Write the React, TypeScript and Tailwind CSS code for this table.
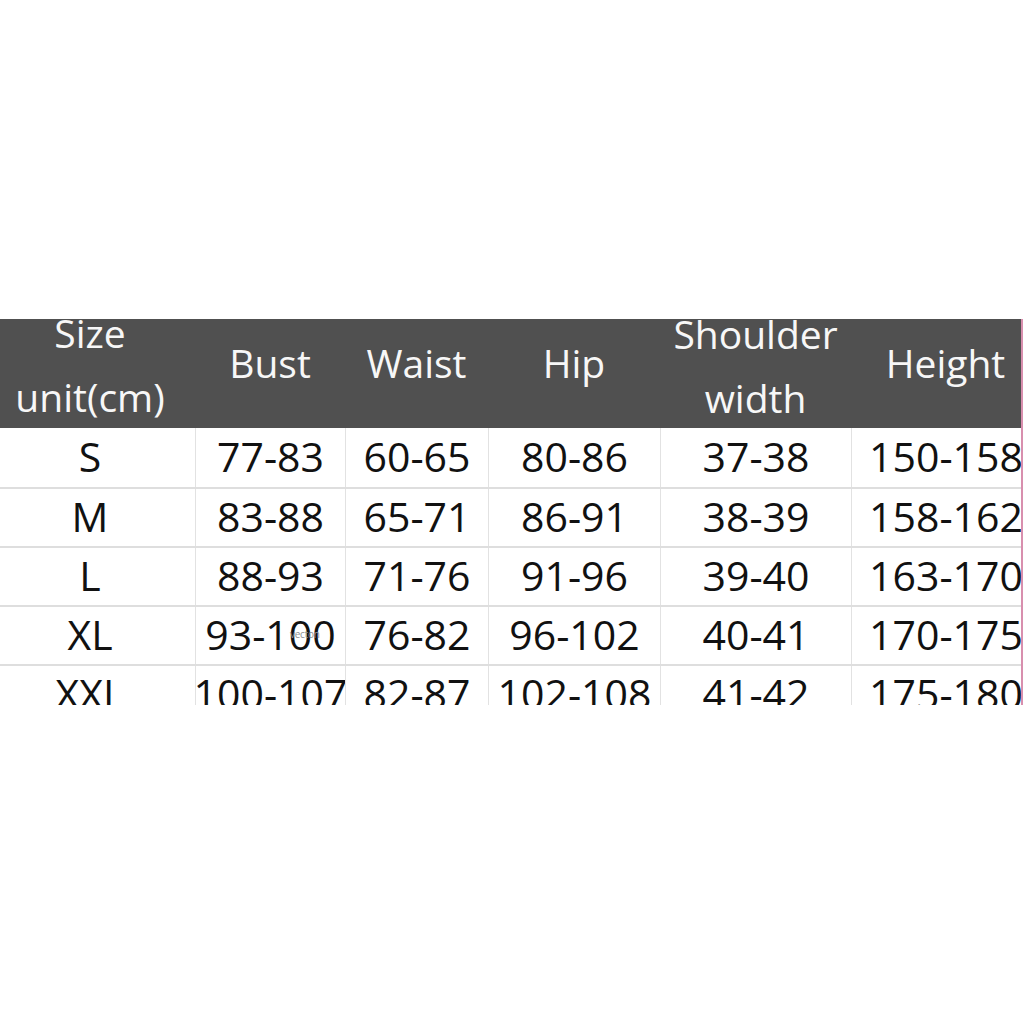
import React from "react";

const cols = [195, 150, 143, 172, 191, 189];
const header = [["Size", "unit(cm)"], ["Bust"], ["Waist"], ["Hip"], ["Shoulder", "width"], ["Height"]];
const pads = ["pr-[15px] pb-[18px]", "pb-[22px]", "pb-[22px]", "pb-[22px]", "pb-[16px]", "pb-[22px]"];
const rows = [
  ["S", "77-83", "60-65", "80-86", "37-38", "150-158"],
  ["M", "83-88", "65-71", "86-91", "38-39", "158-162"],
  ["L", "88-93", "71-76", "91-96", "39-40", "163-170"],
  ["XL", "93-100", "76-82", "96-102", "40-41", "170-175"],
  ["XXL", "100-107", "82-87", "102-108", "41-42", "175-180"],
];

export default function App() {
  return (
    <div className="w-[1024px] h-[1024px] bg-white flex flex-col" style={{ fontFamily: '"Open Sans", "Noto Sans", sans-serif' }}>
      <div className="h-[319px] shrink-0" />
      <div className="flex h-[386px] shrink-0">
        <div className="w-[1021px] h-[386px] overflow-hidden">
          <div className="w-[1040px] flex flex-col">
            <div className="flex h-[109px] bg-[#505050] text-[#f7f7f7] text-[39px] leading-[64px]">
              {header.map((h, i) => (
                <div
                  key={i}
                  className={`shrink-0 h-[109px] flex flex-col items-center justify-center overflow-visible ${pads[i]}`}
                  style={{ width: cols[i] }}
                >
                  {h.map((t) => (
                    <div key={t} className="whitespace-nowrap">{t}</div>
                  ))}
                </div>
              ))}
            </div>
            {rows.map((r, ri) => (
              <div key={ri} className={`flex h-[59px] ${ri > 0 ? "border-t-2 border-[#dedede]" : ""}`}>
                {r.map((c, ci) => (
                  <div
                    key={ci}
                    className={`relative shrink-0 flex items-center justify-center pb-[2px] text-[41px] text-[#111] whitespace-nowrap ${ci === 0 ? "pr-[15px]" : "border-l border-[#e2e2e2]"}`}
                    style={{ width: cols[ci] }}
                  >
                    {c}
                    {ri === 3 && ci === 1 && (
                      <span className="absolute left-[94px] top-[20px] text-[10px] text-[#8f8f8f] tracking-tight">vecton</span>
                    )}
                  </div>
                ))}
              </div>
            ))}
          </div>
        </div>
        <div className="w-[2px] h-[386px] bg-[#d88fae]" />
        <div className="w-[1px]" />
      </div>
    </div>
  );
}
